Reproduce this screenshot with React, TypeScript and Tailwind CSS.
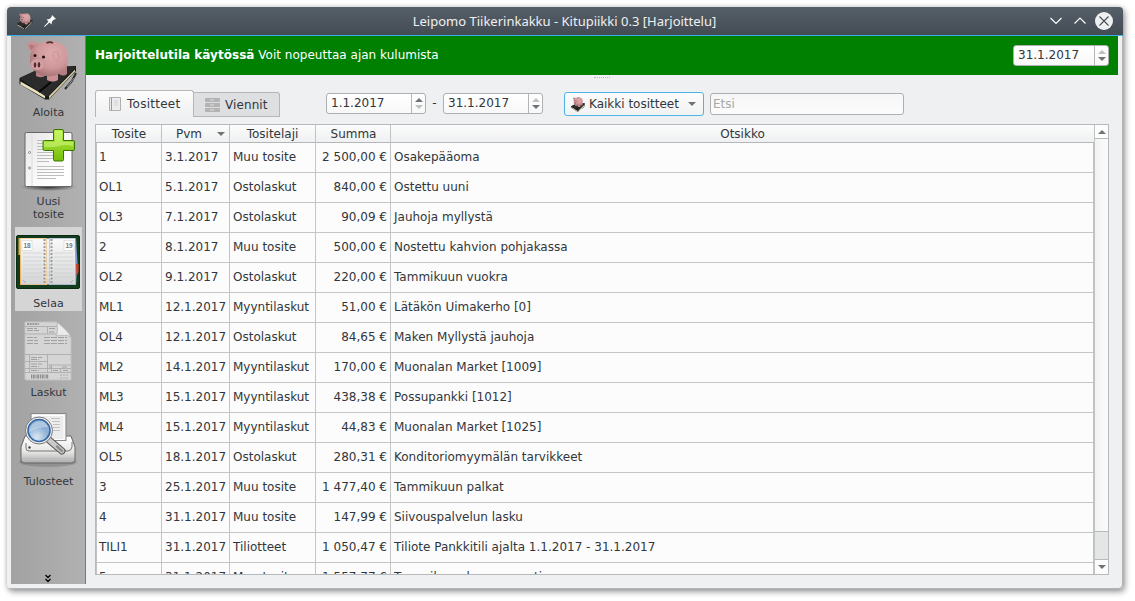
import React from "react";

const rows: string[][] = [
  ["1", "3.1.2017", "Muu tosite", "2 500,00 €", "Osakepääoma"],
  ["OL1", "5.1.2017", "Ostolaskut", "840,00 €", "Ostettu uuni"],
  ["OL3", "7.1.2017", "Ostolaskut", "90,09 €", "Jauhoja myllystä"],
  ["2", "8.1.2017", "Muu tosite", "500,00 €", "Nostettu kahvion pohjakassa"],
  ["OL2", "9.1.2017", "Ostolaskut", "220,00 €", "Tammikuun vuokra"],
  ["ML1", "12.1.2017", "Myyntilaskut", "51,00 €", "Lätäkön Uimakerho [0]"],
  ["OL4", "12.1.2017", "Ostolaskut", "84,65 €", "Maken Myllystä jauhoja"],
  ["ML2", "14.1.2017", "Myyntilaskut", "170,00 €", "Muonalan Market [1009]"],
  ["ML3", "15.1.2017", "Myyntilaskut", "438,38 €", "Possupankki [1012]"],
  ["ML4", "15.1.2017", "Myyntilaskut", "44,83 €", "Muonalan Market [1025]"],
  ["OL5", "18.1.2017", "Ostolaskut", "280,31 €", "Konditoriomyymälän tarvikkeet"],
  ["3", "25.1.2017", "Muu tosite", "1 477,40 €", "Tammikuun palkat"],
  ["4", "31.1.2017", "Muu tosite", "147,99 €", "Siivouspalvelun lasku"],
  ["TILI1", "31.1.2017", "Tiliotteet", "1 050,47 €", "Tiliote Pankkitili ajalta 1.1.2017 - 31.1.2017"],
  ["5", "31.1.2017", "Muu tosite", "1 557,77 €", "Tammikuun kassamyynti"],
];

const grid = "grid grid-cols-[65px_68px_86px_75px_704px]";

function Pig({ id, className }: { id: string; className: string }) {
  return (
    <svg viewBox="0 0 58 62" className={className}>
      <defs>
        <radialGradient id={id} cx="0.6" cy="0.35" r="0.7">
          <stop offset="0" stopColor="#dfacae" />
          <stop offset="0.6" stopColor="#cf9799" />
          <stop offset="1" stopColor="#a06e71" />
        </radialGradient>
      </defs>
      <path d="M0.500 38 L24 27 L57 26 L57 31 L30 59.500 L26 59.500 L0.500 44 Z" fill="#191919" />
      <path d="M1.500 41.500 L26 55.500 L26 58.500 L1.500 44.500 Z" fill="#ebe3bd" />
      <path d="M30 56 L56 29.500 L56 31.500 L30 59 Z" fill="#d8cda2" />
      <path d="M1 38.500 L24 27 L57 27 L29 56 Q28 57 26 56 Z" fill="#2b2b2b" />
      <path d="M20 52 L32 42" stroke="#070707" strokeWidth="2" />
      <path d="M57 33 L53 41 L46 49" stroke="#2a2a2a" strokeWidth="2" fill="none" />
      <path d="M55 38 L48 47" stroke="#b5b5b5" strokeWidth="0.8" />
      <path d="M17 28 h9 v8 q-4 2.500 -9 0 Z M40 24 h8 v10 q-4 3 -8 0 Z" fill="#b67f82" />
      <path d="M28 28 h11 v12 q-5 3 -11 0 Z" fill="#c98f92" />
      <path d="M11 17 Q12 8 19 4 Q26 0.500 34 1 Q49 3 49 19 Q49 28 43 32.500 Q32 39 20 34 Q10 29 11 17 Z" fill={`url(#${id})`} />
      <path d="M20 5 Q15 8 12.500 12 Q8 9 8.500 4 Q9 2 13 1.500 Q18 1.500 20 5 Z" fill="#c98f92" />
      <path d="M10 5 Q13 4 16 6 L12.500 10 Q10 8 10 5 Z" fill="#b27a7e" />
      <path d="M33 14 Q35 10 39 12.500 Q41 17 38 21 Q34 19 33 14 Z" fill="#d8a4a6" stroke="#b88084" strokeWidth="0.4" />
      <ellipse cx="18.500" cy="24.500" rx="7" ry="5.800" fill="#d3a0a2" stroke="#b78487" strokeWidth="0.400" />
      <ellipse cx="16" cy="25" rx="1.300" ry="2.700" fill="#572a2e" />
      <ellipse cx="20" cy="24.700" rx="1.300" ry="2.700" fill="#572a2e" />
      <circle cx="16" cy="15.500" r="1.500" fill="#221315" />
      <circle cx="24.500" cy="17" r="1.600" fill="#221315" />
      <path d="M27.500 3 q3.500 -1.800 6.500 0" stroke="#562c2f" strokeWidth="1.600" fill="none" />
    </svg>
  );
}

function NewVoucherIcon() {
  return (
    <svg viewBox="0 0 60 64" className="h-[64px] w-[60px]">
      <defs>
        <linearGradient id="paper" x2="1" y2="1">
          <stop stopColor="#e6e6e6" />
          <stop offset="0.7" stopColor="#fff" />
        </linearGradient>
        <linearGradient id="plus" x2="0" y2="1">
          <stop stopColor="#b7ef45" />
          <stop offset="1" stopColor="#75bd0d" />
        </linearGradient>
        <radialGradient id="floor">
          <stop stopColor="#333" />
          <stop offset="1" stopColor="#333" stopOpacity="0" />
        </radialGradient>
      </defs>
      <ellipse cx="30.500" cy="60" rx="28" ry="4" fill="url(#floor)" />
      <rect x="7" y="5.500" width="47" height="54" rx="1.500" fill="url(#paper)" stroke="#666" />
      <path d="M14 7 v52" stroke="#ddd" />
      <g fill="none" stroke="#888">
        <circle cx="11.500" cy="25.500" r="1" />
        <circle cx="11.500" cy="41" r="1" />
      </g>
      <path d="M19 13.500h27M19 16.500h27M19 19.500h27M19 22.500h27M19 25.500h27M19 28.500h27M19 31.500h27M19 34.500h12M19 39.500h27M19 42.500h27M19 45.500h27M19 48.500h27M19 51.500h19" stroke="#bdbdbd" />
      <path d="M37 2.500 h7 q1.500 0 1.500 1.500 V13.500 h9.500 q1.500 0 1.500 1.500 v7 q0 1.500-1.500 1.500 H45.500 v9 q0 1.500-1.500 1.500 h-7 q-1.500 0-1.500-1.500 v-9 h-9 q-1.500 0-1.500-1.500 v-7 q0-1.500 1.500-1.500 h9 V4 Q35.500 2.500 37 2.500Z" fill="url(#plus)" stroke="#397600" />
      <path d="M37 4 h7 v11 h11 v4 q-8-2-14 0-6 2-15 1 v-5 h11Z" fill="#d7fa83" opacity="0.5" />
    </svg>
  );
}

function DiaryIcon() {
  return (
    <svg viewBox="0 0 64 54" className="h-[54px] w-[64px]">
      <defs>
        <linearGradient id="page" x2="0" y2="1">
          <stop stopColor="#fafafa" />
          <stop offset="1" stopColor="#d3d4d5" />
        </linearGradient>
      </defs>
      <rect x="0.5" y="0.5" width="63" height="53" rx="1.500" fill="#123c1b" stroke="#0b2c13" />
      <path d="M2.500 3 h28 v47 H4 V20 H2.500Z" fill="#edad4a" />
      <path d="M33 3 h27 l1.500 24 v2 l-1.500 21 H33Z" fill="#7b9bd0" />
      <path d="M60 29 h2.500 v8 l-2 4Z" fill="#df3a20" />
      <path d="M4.500 3.500 H59 L59.500 49.500 H5Z" fill="url(#page)" />
      <path d="M30.500 4v46" stroke="#eccb9c" />
      <path d="M33.500 4v46" stroke="#b7c7e2" />
      <path d="M7 18h19M7 22h19M7 26h19M7 30h19M7 34h19M7 38h19M7 42h19M38 18h19M38 22h19M38 26h19M38 30h19M38 34h19M38 38h19M38 42h19" stroke="#cbcdce" strokeWidth=".7" />
      <rect x="6" y="5.500" width="10" height="10" fill="#fff" stroke="#ccc" strokeWidth=".5" />
      <rect x="48" y="5.500" width="10" height="10" fill="#fff" stroke="#ccc" strokeWidth=".5" />
      <text x="7.500" y="13" fontSize="6.500" fontFamily="Liberation Sans, sans-serif" fontWeight="700" fill="#777">18</text>
      <text x="49.500" y="13" fontSize="6.500" fontFamily="Liberation Sans, sans-serif" fontWeight="700" fill="#777">19</text>
      <path d="M28.500 4v45M35.500 4v45" stroke="#999" strokeWidth="2" strokeDasharray="2 1.500" />
      <path d="M29 7.500h6M29 14.500h6M29 21.500h6M29 28.500h6M29 35.500h6M29 42.500h6" stroke="#e4e4e4" />
      <path d="M7 45l3 3M57 45l-3 3" stroke="#999" strokeWidth=".7" />
    </svg>
  );
}

function InvoiceIcon() {
  return (
    <svg viewBox="0 0 48 60" className="h-[60px] w-[48px]">
      <path d="M1 1H33Q37 11 47 16V58Q47 59 46 59H2Q1 59 1 58Z" fill="#d5d5d5" stroke="#c2c2c2" />
      <path d="M33 1Q34 13 32 15Q42 13 47 16Q45 11 33 1Z" fill="#ebebeb" stroke="#b1b1b1" strokeWidth=".8" />
      <path d="M1 5.500H33M23.500 5.500V13H32M1 13H23M1 33.500H47M1 40.500H23M1 47.500H47M1 51.500H47M5.500 33.500V51M23.500 33.500V51M27.500 44V51M23.500 44H47M36.500 47V51" stroke="#ababab" fill="none" strokeWidth=".9" />
      <path d="M3 3h12" stroke="#999" strokeWidth="2" strokeDasharray="2 .7" />
      <path d="M3 7.500h10M3 9.500h12M25 7.500h6M25 11h5M3 16.500h10M3 19.500h11M3 22.500h11M20 16.500h23M20 19.500h23M20 22.500h23M7 36.500h11M7 38.500h8M7 43h11M7 45.500h8M7 49.500h8M25 46h3M38 46h5M29 49.500h5M39 49.500h5" stroke="#a0a0a0" strokeDasharray="6 1" />
      <path d="M7 55.500h18" stroke="#909090" strokeWidth="4" strokeDasharray="1 .7 2 .8" />
      <path d="M36 54h9M36 57h9" stroke="#aaa" strokeDasharray="2 1" />
    </svg>
  );
}

function PrintoutIcon() {
  return (
    <svg viewBox="0 0 58 56" className="h-[56px] w-[58px]">
      <defs>
        <linearGradient id="printer" x2="0" y2="1">
          <stop stopColor="#fff" />
          <stop offset=".6" stopColor="#e5e5e3" />
          <stop offset="1" stopColor="#aaa" />
        </linearGradient>
        <radialGradient id="glass" cx=".4" cy=".8">
          <stop stopColor="#dbe8f4" />
          <stop offset="1" stopColor="#8db0d4" />
        </radialGradient>
      </defs>
      <ellipse cx="29" cy="50" rx="29" ry="5" fill="#555" opacity=".3" />
      <path d="M6 24 H52 L56 35 V48 Q56 51 52 51 H6 Q2 51 2 48 V35Z" fill="url(#printer)" stroke="#666" />
      <path d="M3 46.500h52" stroke="#bbb" />
      <path d="M7 31 v5 q0 3 3 3 h39 q3 0 4-4 v-5" fill="none" stroke="#777" />
      <rect x="12" y="1.500" width="35" height="27" fill="#ededed" stroke="#888" />
      <rect x="14" y="3.500" width="31" height="24" fill="none" stroke="#fff" />
      <path d="M32 6.500h9M33 9.500h8M34 12.500h7M34 15.500h7M34 18.500h7" stroke="#c2c2c2" />
      <circle cx="10.500" cy="35.500" r="1.200" fill="#444" />
      <path d="M30 28 L43 39" stroke="#555" strokeWidth="7" strokeLinecap="round" />
      <path d="M30 28 L43 39" stroke="#c9c9c9" strokeWidth="5" strokeLinecap="round" />
      <path d="M38 34.500 L43 39" stroke="#8f8f8f" strokeWidth="2.500" strokeLinecap="round" />
      <circle cx="20" cy="18.500" r="13.500" fill="#f0f0f0" stroke="#777" />
      <circle cx="20" cy="18.500" r="11" fill="url(#glass)" stroke="#3567a5" strokeWidth="1.600" />
      <path d="M10 20 Q12 9 23 9 Q27 10 29 15 Q20 15 10 20Z" fill="#fff" opacity=".3" />
    </svg>
  );
}

function Arrow({ up = false, faint = false, className = "h-[4px] w-[8px]" }: { up?: boolean; faint?: boolean; className?: string }) {
  return (
    <svg viewBox="0 0 8 4" className={className}>
      <path d={up ? "M0 4L4 0L8 4Z" : "M0 0L4 4L8 0Z"} fill={faint ? "#bdbfc0" : "#707375"} />
    </svg>
  );
}

function DateBox({ value, className, atMax = true }: { value: string; className: string; atMax?: boolean }) {
  return (
    <div className={`flex h-[21px] rounded-[3px] border border-[#adafb0] bg-gradient-to-b from-white to-[#f8f8f8] ${className}`}>
      <span className="flex-1 pl-[4px] leading-[19px]">{value}</span>
      <span className="flex w-[14px] flex-col items-center justify-between border-l border-[#b4b6b7] py-[4px]">
        <Arrow up faint={atMax} />
        <Arrow faint={!atMax} />
      </span>
    </div>
  );
}

export default function App() {
  return (
    <div className="h-[601px] w-[1135px] overflow-hidden bg-white pl-[7px] pt-[7px] font-['DejaVu_Sans',sans-serif] text-[12px] text-[#31363b]">
      <div className="flex h-[582px] w-[1116px] flex-col rounded-[4px] bg-[#eff0f1] shadow-[2px_3px_6px_rgba(0,0,0,0.35),0_0_5px_rgba(0,0,0,0.2),inset_-1px_-1px_0_#b4b5b6]">
        <header className="flex h-[29px] shrink-0 items-center rounded-t-[4px] border-b border-[#3daee9] bg-gradient-to-b from-[#566069] to-[#434b53] pl-[9px] text-[#eff0f1]">
          <Pig id="titlePig" className="h-[17px] w-[18px] shrink-0" />
          <svg viewBox="0 0 12 12" className="ml-[10px] h-[12px] w-[12px] shrink-0">
            <path d="M8 0l4 4-2 .5-2 2-.5 3-2-2L.5 12 0 11.500l4.500-5-2-2 3-.5 2-2Z" fill="#fcfcfc" />
          </svg>
          <h1 className="flex-1 pl-[23px] text-center font-['Noto_Sans',sans-serif] text-[13px] leading-[26px]">Leipomo Tiikerinkakku - Kitupiikki 0.3 [Harjoittelu]</h1>
          <div className="flex shrink-0 items-center gap-[12px] pr-[10px]">
            <svg viewBox="0 0 12 8" className="h-[8px] w-[12px]"><path d="M.5 1l5.500 5.500L11.500 1" fill="none" stroke="#fcfcfc" strokeWidth="1.200" /></svg>
            <svg viewBox="0 0 12 8" className="h-[8px] w-[12px]"><path d="M.5 6.500L6 1l5.500 5.500" fill="none" stroke="#fcfcfc" strokeWidth="1.200" /></svg>
            <svg viewBox="0 0 18 18" className="-ml-[3px] h-[18px] w-[18px]"><circle cx="9" cy="9" r="9" fill="#eff0f1" /><path d="M4.500 4.500l9 9M13.500 4.500l-9 9" stroke="#4b535a" strokeWidth="1.200" /></svg>
          </div>
        </header>

        <div className="flex h-[548px] pl-[4px]">
          <nav className="flex h-[548px] w-[75px] shrink-0 flex-col items-center border-r border-[#77797b] bg-gradient-to-r from-[#a2a2a2] to-[#b1b1b1] text-center text-[11px] leading-[13px]">
            <div className="flex h-[89px] flex-col items-center pt-[4px]">
              <Pig id="navPig" className="h-[62px] w-[58px]" />
              <span className="mt-[4px] pl-px">Aloita</span>
            </div>
            <div className="flex h-[102px] flex-col items-center pt-[2px]">
              <NewVoucherIcon />
              <span className="mt-[4px] w-[50px] pl-px">Uusi tosite</span>
            </div>
            <div className="flex h-[84px] w-[67px] flex-col items-center bg-[#d5d5d5] pt-[8px]">
              <DiaryIcon />
              <span className="mt-[8px] pl-px">Selaa</span>
            </div>
            <div className="flex h-[89px] flex-col items-center pt-[10px]">
              <InvoiceIcon />
              <span className="mt-[5px] pl-px">Laskut</span>
            </div>
            <div className="flex h-[90px] flex-col items-center pt-[12px]">
              <PrintoutIcon />
              <span className="mt-[7px] pl-px">Tulosteet</span>
            </div>
            <svg viewBox="0 0 6 9" className="mb-px mt-auto h-[9px] w-[6px]"><path d="M.5 1L3 3.500 5.500 1M.5 5L3 7.500 5.500 5" fill="none" stroke="#000" strokeWidth="1.300" /></svg>
          </nav>

          <main className="w-[1032px] shrink-0">
            <section className="flex h-[39px] items-center bg-[#008000] pl-[9px] pr-[9px] text-white">
              <p className="flex-1 whitespace-pre pb-[2px] leading-[14px] tracking-[0.02px]"><b>Harjoittelutila käytössä</b> Voit nopeuttaa ajan kulumista</p>
              <DateBox value="31.1.2017" className="w-[96px] text-[#31363b]" />
            </section>
            <div className="mx-auto mt-[2px] w-[16px] border-t border-dotted border-[#b5b7b8]" />

            <div className="flex h-[46px] items-start pl-[9px] pt-[12px]">
              <div className="flex h-[27px] w-[99px] items-center rounded-t-[3px] border border-b-0 border-[#b4b6b7] bg-gradient-to-b from-[#fcfcfc] to-[#eff0f1] pl-[13px]">
                <svg viewBox="0 0 12 14" className="mr-[6px] h-[14px] w-[12px]"><path d="M.5.5h11v13H.5Z" fill="#ececec" stroke="#b0b0b0" /><path d="M2.500 1v12" stroke="#999" /><path d="M5 4h4M5 6h4M5 8h4" stroke="#d2d2d2" /></svg>
                <span className="tracking-[0.25px]">Tositteet</span>
              </div>
              <div className="mt-[2px] flex h-[25px] w-[86px] items-center rounded-tr-[3px] border border-l-0 border-[#b4b6b7] bg-[#dddfe0] pl-[11px]">
                <svg viewBox="0 0 15 14" className="mr-[5px] h-[14px] w-[15px]">
                  <path d="M.5.5h14v3H.5ZM.5 5.500h14v3H.5ZM.5 10.500h14v3H.5Z" fill="#c9c9c9" stroke="#b2b2b2" />
                  <path d="M1 2h4M9 2h5M1 7h4M9 7h5M1 12h4M9 12h5" stroke="#a0a0a0" />
                </svg>
                <span className="tracking-[0.1px]">Viennit</span>
              </div>
              <DateBox value="1.1.2017" atMax={false} className="ml-[46px] mt-[3px] w-[100px]" />
              <span className="mt-[3px] w-[17px] text-center leading-[21px]">-</span>
              <DateBox value="31.1.2017" className="mt-[3px] w-[100px]" />
              <button className="ml-[21px] mt-[2px] flex h-[24px] w-[140px] items-center rounded-[3px] border border-[#4fb3e8] bg-gradient-to-b from-[#fcfcfc] to-[#f1f2f2] pl-[6px]">
                <Pig id="filterPig" className="mr-[4px] h-[15px] w-[14px]" />
                <span>Kaikki tositteet</span>
                <Arrow className="ml-[9px] h-[4px] w-[8px]" />
              </button>
              <input placeholder="Etsi" className="ml-[6px] mt-[3px] h-[22px] w-[194px] rounded-[3px] border border-[#adafb0] bg-gradient-to-b from-[#f6f6f6] to-[#fcfcfc] px-[2px] placeholder:text-[#a6a8aa]" />
            </div>

            <div className="ml-[9px] flex h-[451px] w-[1014px] border border-[#b7b9ba] bg-[#fcfcfc]">
              <div className="w-[999px] shrink-0 overflow-hidden border-r border-[#c0c2c3]">
                <div className={`${grid} h-[18px] border-b border-[#b4b6b7] bg-gradient-to-b from-[#fcfcfc] to-[#eff0f1] text-center leading-[18px]`}>
                  <div className="pl-px">Tosite</div>
                  <div className="flex items-center border-l border-[#c0c2c3] pl-[14px]">Pvm<Arrow className="ml-[15px] h-[4px] w-[8px]" /></div>
                  <div className="border-l border-[#c0c2c3]">Tositelaji</div>
                  <div className="border-l border-[#c0c2c3] pl-px">Summa</div>
                  <div className="border-l border-[#c0c2c3]">Otsikko</div>
                </div>
                <div className="h-[431px] overflow-hidden border-x border-[#c0c2c3]">
                  {rows.map((r) => (
                    <div key={r[0]} className={`${grid} -ml-px h-[30px] whitespace-pre border-b border-[#c3c5c6] leading-[28px]`}>
                      <div className="pl-[3px]">{r[0]}</div>
                      <div className="border-l border-[#c3c5c6] pl-[3px]">{r[1]}</div>
                      <div className="border-l border-[#c3c5c6] pl-[3px]">{r[2]}</div>
                      <div className="border-l border-[#c3c5c6] pr-[3px] text-right">{r[3]}</div>
                      <div className="border-l border-[#c3c5c6] pl-[3px]">{r[4]}</div>
                    </div>
                  ))}
                </div>
              </div>
              <div className="flex w-[13px] flex-col">
                <div className="flex h-[14px] items-center justify-center border-b border-[#b7b9ba]"><Arrow up /></div>
                <div className="flex-1 bg-gradient-to-r from-[#f1f2f2] to-[#fcfcfc]" />
                <div className="h-[29px] border-y border-[#b7b9ba] bg-[#e4e6e6]" />
                <div className="flex h-[14px] items-center justify-center"><Arrow /></div>
              </div>
            </div>
          </main>
        </div>
      </div>
    </div>
  );
}
